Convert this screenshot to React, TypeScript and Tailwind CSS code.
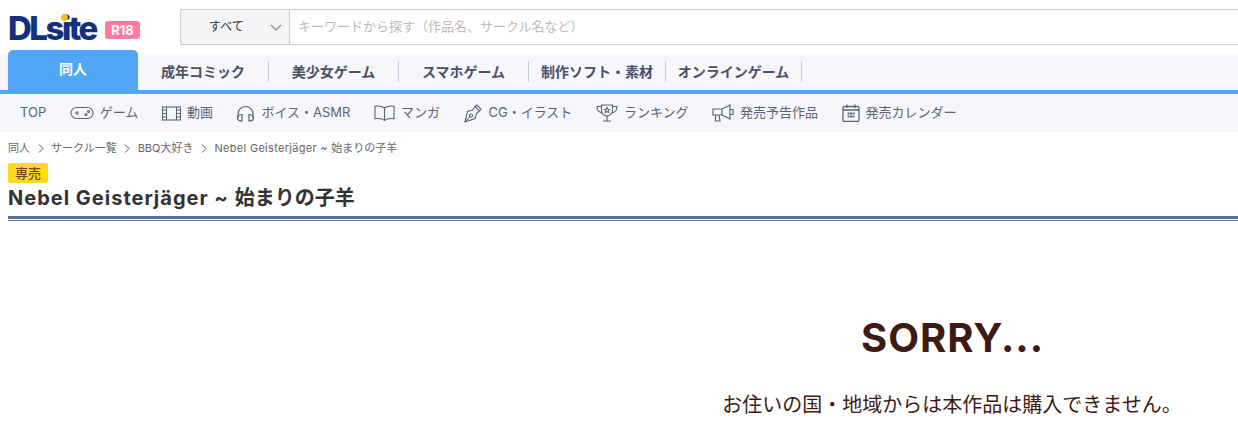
const jp = 'font-["Inter","Noto_Sans_CJK_JP",sans-serif]';

function GameIcon() {
  return (
    <svg width="24" height="14" viewBox="0 0 24 14" fill="none" stroke="currentColor" strokeWidth="1.1">
      <rect x="1" y="1.5" width="22" height="11" rx="5.5" />
      <path d="M5 7h4M7 5v4" />
      <circle cx="16" cy="8.5" r="1" />
      <circle cx="18.5" cy="5.5" r="1" />
    </svg>
  );
}

function FilmIcon() {
  return (
    <svg width="19" height="15" viewBox="0 0 19 15" fill="none" stroke="currentColor" strokeWidth="1.1">
      <rect x="0.5" y="1" width="18" height="13" />
      <path d="M4.5 1v13M14.5 1v13" />
      <path d="M0.5 4h4M0.5 7.5h4M0.5 11h4M14.5 4h4M14.5 7.5h4M14.5 11h4" />
    </svg>
  );
}

function HeadphoneIcon() {
  return (
    <svg width="19" height="17" viewBox="0 0 19 17" fill="none" stroke="currentColor" strokeWidth="1.2">
      <path d="M2 13V9a7.5 7.5 0 0 1 15 0v4" />
      <path d="M6 9.5v6.5C3.5 16 1.5 15 1.5 12.7S3.5 9.5 6 9.5Z" />
      <path d="M13 9.5v6.5c2.500 0 4.500-1 4.500-3.300S15.500 9.500 13 9.500Z" />
    </svg>
  );
}

function BookIcon() {
  return (
    <svg width="21" height="16" viewBox="0 0 21 16" fill="none" stroke="currentColor" strokeWidth="1.1">
      <path d="M10.500 3C8.500 1.300 5 .8 1 1.200v12.500c4-.4 7.500 0 9.500 1.700 2-1.700 5.500-2.100 9.500-1.700V1.200C16 .8 12.500 1.300 10.500 3Z" />
      <path d="M10.500 3v12.400" />
    </svg>
  );
}

function PenIcon() {
  return (
    <svg width="19" height="19" viewBox="0 0 19 19" fill="none" stroke="currentColor" strokeWidth="1.1">
      <path d="M12 2.500 16.500 7l-3 2.500-1.500 5L2 18 4.500 7.500l5-1.500Z" />
      <path d="M12 2.500 14 1l4 4-1.500 2" />
      <circle cx="8" cy="11.500" r="1.500" />
      <path d="M2 18l5-5.500" />
    </svg>
  );
}

function TrophyIcon() {
  return (
    <svg width="22" height="18" viewBox="0 0 22 18" fill="none" stroke="currentColor" strokeWidth="1.1">
      <path d="M5.500 1h11v5.500a5.500 5.500 0 0 1-11 0Z" />
      <path d="M5.500 2.500H1c0 4 1.500 6 5.500 6.500M16.500 2.500H21c0 4-1.500 6-5.500 6.500" />
      <path d="M11 12v4.500M7 17h8" />
      <path d="m11 3.500.8 1.700 1.800.2-1.300 1.300.3 1.800L11 7.600l-1.600.9.300-1.800-1.300-1.300 1.800-.2Z" />
    </svg>
  );
}

function MegaphoneIcon() {
  return (
    <svg width="22" height="18" viewBox="0 0 22 18" fill="none" stroke="currentColor" strokeWidth="1.2">
      <path d="M1 5h9l8-4v14l-8-4H1Z" />
      <path d="M10 5v6M18 5.500h3v5h-3" />
      <path d="M3.500 11v6h4.500l-1-6" />
    </svg>
  );
}

function CalendarIcon() {
  return (
    <svg width="18" height="18" viewBox="0 0 18 18" fill="none" stroke="currentColor" strokeWidth="1.3">
      <rect x="1" y="2.500" width="16" height="15" rx="1.500" />
      <path d="M1 6h16M5 .5v3.500M13 .5v3.500" />
      <path d="M5.500 9.500h2M8 9.500h2M10.500 9.500h2M5.500 12.500h2M8 12.500h2M10.500 12.500h2" strokeWidth="2" />
    </svg>
  );
}

function Chevron() {
  return (
    <svg width="6" height="9" viewBox="0 0 6 9" fill="none" stroke="#555" strokeWidth="1">
      <path d="m1 .5 4 4-4 4" />
    </svg>
  );
}

const subNav = [
  { label: 'ゲーム', icon: <GameIcon />, width: 'w-[24px]' },
  { label: '動画', icon: <FilmIcon />, width: 'w-[19px]' },
  { label: 'ボイス・ASMR', icon: <HeadphoneIcon />, width: 'w-[19px]' },
  { label: 'マンガ', icon: <BookIcon />, width: 'w-[21px]' },
  { label: 'CG・イラスト', icon: <PenIcon />, width: 'w-[19px]' },
  { label: 'ランキング', icon: <TrophyIcon />, width: 'w-[22px]' },
  { label: '発売予告作品', icon: <MegaphoneIcon />, width: 'w-[22px]' },
  { label: '発売カレンダー', icon: <CalendarIcon />, width: 'w-[18px]' },
];

export default function App() {
  return (
    <div className={`h-[448px] w-[1238px] overflow-hidden bg-white ${jp}`}>
      {/* Header */}
      <div className="flex h-[50px] items-start">
        <div className="ml-2 mt-[10px] flex w-[172px] items-center">
          <span className="relative w-[97px] text-[33px] font-extrabold leading-[36px] tracking-[-2.5px] text-[#13307f]">
            DLsite
            <span className="absolute left-[53px] top-[4px] h-[7px] w-[7px] rounded-full bg-[#fdb913]" />
          </span>
          <span className="mt-[4px] flex h-[18px] w-[35px] items-center justify-center rounded-[3px] bg-[#ff7a9f] text-[13px] font-bold leading-none text-white">
            R18
          </span>
        </div>
        <div className="mt-[9px] flex h-[36px] flex-1 border-y border-[#cccccc] bg-white">
          <div className="flex w-[110px] items-center rounded-l-[3px] border-x border-[#cccccc] bg-[#f5f5f8] pl-[28px] text-xs text-[#333333]">
            すべて
            <svg className="ml-[26px]" width="12" height="7" viewBox="0 0 12 7" fill="none" stroke="#999" strokeWidth="1.500">
              <path d="m1 1 5 5 5-5" />
            </svg>
          </div>
          <div className="flex items-center pl-[8px] text-[13px] text-[#bbbbbb]">キーワードから探す（作品名、サークル名など）</div>
        </div>
      </div>

      {/* Category tabs */}
      <div className="h-[40px] bg-[linear-gradient(to_bottom,#ffffff_4px,#f6f6fb_4px)] pl-2">
        <div className="flex h-full items-end text-sm font-bold text-[#4a5068]">
          <div className="flex h-[40px] w-[130px] items-start justify-center rounded-t-[5px] bg-[#52a6f8] pt-[9px] text-white">同人</div>
          <div className="mb-[8px] flex h-[21px] w-[131px] items-center justify-center border-r border-[#c3cadc]">成年コミック</div>
          <div className="mb-[8px] flex h-[21px] w-[130px] items-center justify-center border-r border-[#c3cadc]">美少女ゲーム</div>
          <div className="mb-[8px] flex h-[21px] w-[130px] items-center justify-center border-r border-[#c3cadc]">スマホゲーム</div>
          <div className="mb-[8px] flex h-[21px] w-[137px] items-center justify-center border-r border-[#c3cadc]">制作ソフト・素材</div>
          <div className="mb-[8px] flex h-[21px] w-[136px] items-center justify-center border-r border-[#c3cadc]">オンラインゲーム</div>
        </div>
      </div>
      <div className="h-[4px] bg-[#52a6f8]" />

      {/* Sub navigation */}
      <div className="flex h-[38px] items-center gap-[23.5px] bg-[#f6f6fb] pl-[20px] text-[13px] text-[#5c6378]">
        <span>TOP</span>
        {subNav.map((item) => (
          <div key={item.label} className="flex items-center gap-[6px]">
            <span className={`flex justify-center ${item.width}`}>{item.icon}</span>
            <span>{item.label}</span>
          </div>
        ))}
      </div>

      {/* Breadcrumb */}
      <div className="ml-2 mt-[9px] flex h-[15px] items-center gap-[7.5px] text-[11px] leading-none text-[#666666]">
        <span>同人</span>
        <Chevron />
        <span>サークル一覧</span>
        <Chevron />
        <span>BBQ大好き</span>
        <Chevron />
        <span>
          <span className="tracking-[0.3px]">Nebel Geisterjäger ~ </span>始まりの子羊
        </span>
      </div>

      {/* Title */}
      <div className="ml-2 mt-[7px]">
        <div className="flex h-[20px] w-[40px] items-center justify-center rounded-[2px] bg-[#ffd820] text-[13px] font-medium leading-none text-[#6b4a00]">専売</div>
        <h1 className="h-[33px] text-xl font-bold leading-[30px] text-[#333333]">
          <span className="tracking-[1px]">Nebel Geisterjäger ~ </span>始まりの子羊
        </h1>
        <div className="h-[5px] border-t-[3px] border-b border-[#5f6f9d]" />
      </div>

      {/* Sorry message */}
      <div className="flex justify-end text-[#3e1a14]">
        <div className="w-[580px] text-center">
          <div className="mt-[90px] pl-[9px] text-[40px] font-bold leading-[54px] tracking-[1px]">SORRY...</div>
          <div className="mt-[25px] pl-[8px] text-xl leading-[30px]">お住いの国・地域からは本作品は購入できません。</div>
        </div>
      </div>
    </div>
  );
}
